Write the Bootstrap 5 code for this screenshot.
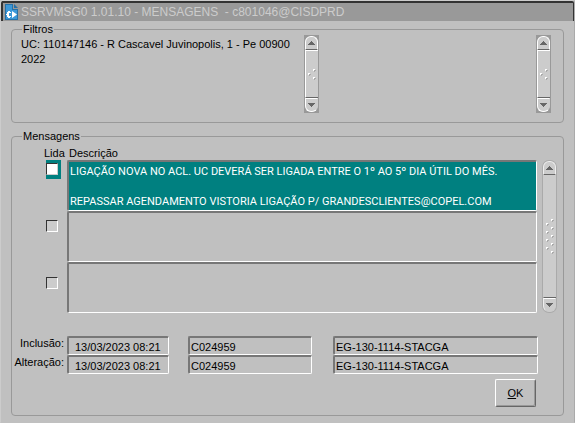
<!DOCTYPE html>
<html lang="pt-BR">
<head>
<meta charset="utf-8">
<meta name="viewport" content="width=device-width, initial-scale=1">
<title>SSRVMSG0 - Mensagens</title>
<link href="https://cdn.jsdelivr.net/npm/bootstrap@5.3.0/dist/css/bootstrap.min.css" rel="stylesheet">
<style>
body { background: #c0c0c0; color: #000; font: 11px/15px "Liberation Sans", Arial, sans-serif; }
.app-window { min-height: 100vh; border: 1px solid #ccc; border-right-color: #aaa; border-bottom-color: #c0c0c0; border-radius: 3px 3px 0 0; }
.title-strip { height: 20px; background: #999; border: solid #333; border-width: 2px 1px 0 2px; border-radius: 2px 2px 0 0; color: #ccc; font-size: 12px; line-height: 18px; padding-left: 2px; }
.title-strip span { margin-left: 3px; }
.group-box { border: 1px solid #999; border-radius: 4px; margin: 0 10px; }
.group-box > legend { float: none; width: auto; margin: 0 0 0 1px; font-size: 11px; line-height: 12px; padding: 0 1px; }
.box-filters { padding: 0 12px 9px 9px; margin-top: 2px; }
.box-messages { padding: 0 25px 8px 9px; margin-top: 7px; }
.filter-text { height: 78px; border: 0; padding: 2px 0; background: transparent; resize: none; overflow: hidden; outline: 0; color: #000; width: 100%; min-width: 0; display: block; }
.filter-main { flex: 298; }
.filter-extra { flex: 232; }
.field { background: #c0c0c0; color: #000; border: 2px solid; border-color: #777 #fff #fff #777; border-radius: 2px; width: 100%; min-width: 0; outline: 0; padding: 2px 1px 0; display: block; }
textarea.field { height: 51px; resize: none; overflow: hidden; border-width: 2px 1px 1px 2px; font-family: Roboto, "Liberation Sans", sans-serif; }
.field.is-current { background: #008080; color: #fff; }
input.field { height: 19px; padding: 2px 1px 0; line-height: 13px; border-width: 2px 1px 1px 2px; }
input.field.stamp { padding-left: 6px; width: 102px; }
input.field.user { width: 124px; }
.read-col { width: 46px; padding-left: 25px; }
.read-cell { height: 19px; width: 15px; margin-bottom: 38px; padding-top: 3px; }
.read-cell.is-current { background: #008080; }
.read-cell input { appearance: none; display: block; width: 12px; height: 12px; margin: 0; background: #ccc; border: 1px solid; border-color: #333 #fff #fff #333; border-radius: 0; }
.read-cell.is-current input { background: #fff; border-color: #333 #ccc #ccc #333; }
.scroller { width: 15px; flex: none; background: #999; padding: 1px; }
.scroller button { height: 14px; padding: 0; background: #ccc; border: 1px solid #fff; border-bottom-color: #666; border-radius: 6px 6px 0 0; }
.scroller button:last-child { border-color: #fff #ccc #fff #fff; border-radius: 0 0 6px 6px; }
.scroller .thumb { background: #ccc; border-left: 1px solid #fff; border-top: 1px solid #fff; border-bottom: 1px solid #666; }
.scroller svg { display: block; }
.scroller-long { margin: 0 -19px 0 5px; background: #aaa; border-radius: 7px; }
.scroller-long button { border-color: #eee #eee #666; }
.scroller-long button:last-child { border-color: #fff #ccc #ccc #eee; }
.scroller-long .thumb { border-left-color: #ccc; border-top-color: #ccc; }
.heading-row { line-height: 15px; padding-top: 4px; height: 18px; }
.heading-row .lida { width: 48px; padding-left: 23px; }
.audit-grid { display: grid; grid-template-columns: 55px 121px 145px 1fr; margin: 23px 0 0 -9px; }
.audit-grid label { text-align: right; padding-right: 3px; }
.ok-btn { width: 41px; height: 28px; padding: 0; margin: 5px 2px 0 0; color: #000; background: #c0c0c0; border: 1px solid; border-color: #fff #666 #666 #fff; border-radius: 2px; font-size: 11px; line-height: 15px; box-shadow: inset -1px -1px #999; }
</style>
<script src="https://cdn.jsdelivr.net/npm/bootstrap@5.3.0/dist/js/bootstrap.bundle.min.js"></script>
</head>
<body>
<svg class="d-none" aria-hidden="true">
  <symbol id="up" viewBox="0 0 7 4"><path fill="#666" d="M3 0h1v1h1v1h1v1h1v1H0V3h1V2h1V1h1z"/></symbol>
  <symbol id="down" viewBox="0 0 7 4"><path fill="#666" d="M0 0h7v1H6v1H5v1H4v1H3V3H2V2H1V1H0z"/></symbol>
  <symbol id="dot" viewBox="0 0 3 3"><path fill="#aaa" d="M1 1h2v1H2v1H1z"/><path fill="#fff" d="M0 0h2v1H1v1H0z"/></symbol>
</svg>
<main class="app-window">
  <header class="title-strip d-flex align-items-center">
    <svg class="flex-shrink-0" width="13" height="16" viewBox="0 0 13 16" aria-hidden="true"><path fill="#2571a8" d="M0 0h8v5h5v11H0z"/><path fill="#3c98d8" d="M1 1h6v5h5v9H1z"/><path fill="#2571a8" d="M9 0l4 4H9z"/><path fill="#fff" d="M7 7l5 3.500-5 3.500zM3 7h2v1h1v1H4v3h2v1H5v1H3v-1H2v-2H1v-1h1V8h1z"/></svg>
    <span class="text-nowrap">SSRVMSG0 1.01.10 - MENSAGENS&nbsp; - c801046@CISDPRD</span>
  </header>

  <fieldset class="group-box box-filters">
    <legend>Filtros</legend>
    <div class="d-flex">
      <div class="filter-main d-flex">
        <textarea class="filter-text" readonly aria-label="Filtro principal">UC: 110147146 - R Cascavel Juvinopolis, 1 - Pe 00900
2022</textarea>
        <div class="scroller d-flex flex-column">
          <button type="button" class="d-flex align-items-center justify-content-center" aria-label="Subir"><svg width="7" height="4"><use href="#up"/></svg></button>
          <div class="thumb flex-grow-1 d-flex align-items-center justify-content-center"><svg width="8" height="11"><use href="#dot" x="5" y="0" width="3" height="3"/><use href="#dot" x="0" y="4" width="3" height="3"/><use href="#dot" x="5" y="8" width="3" height="3"/></svg></div>
          <button type="button" class="d-flex align-items-center justify-content-center" aria-label="Descer"><svg width="7" height="4"><use href="#down"/></svg></button>
        </div>
      </div>
      <div class="filter-extra d-flex">
        <textarea class="filter-text" readonly aria-label="Filtro adicional"></textarea>
        <div class="scroller d-flex flex-column">
          <button type="button" class="d-flex align-items-center justify-content-center" aria-label="Subir"><svg width="7" height="4"><use href="#up"/></svg></button>
          <div class="thumb flex-grow-1 d-flex align-items-center justify-content-center"><svg width="8" height="11"><use href="#dot" x="5" y="0" width="3" height="3"/><use href="#dot" x="0" y="4" width="3" height="3"/><use href="#dot" x="5" y="8" width="3" height="3"/></svg></div>
          <button type="button" class="d-flex align-items-center justify-content-center" aria-label="Descer"><svg width="7" height="4"><use href="#down"/></svg></button>
        </div>
      </div>
    </div>
  </fieldset>

  <fieldset class="group-box box-messages">
    <legend>Mensagens</legend>
    <div class="heading-row d-flex"><span class="lida" id="h-lida">Lida</span><span id="h-desc">Descrição</span></div>
    <div class="d-flex">
      <div class="read-col flex-shrink-0">
        <div class="read-cell is-current"><input type="checkbox" aria-labelledby="h-lida"></div>
        <div class="read-cell"><input type="checkbox" aria-labelledby="h-lida"></div>
        <div class="read-cell mb-0"><input type="checkbox" aria-labelledby="h-lida"></div>
      </div>
      <div class="flex-grow-1">
        <textarea class="field is-current" readonly aria-labelledby="h-desc">LIGAÇÃO NOVA NO ACL. UC DEVERÁ SER LIGADA ENTRE O 1º AO 5º DIA ÚTIL DO MÊS.

REPASSAR AGENDAMENTO VISTORIA LIGAÇÃO P/ GRANDESCLIENTES@COPEL.COM</textarea>
        <textarea class="field" readonly aria-labelledby="h-desc"></textarea>
        <textarea class="field" readonly aria-labelledby="h-desc"></textarea>
      </div>
      <div class="scroller scroller-long d-flex flex-column">
        <button type="button" class="d-flex align-items-center justify-content-center" aria-label="Subir"><svg width="7" height="4"><use href="#up"/></svg></button>
        <div class="thumb flex-grow-1 d-flex align-items-center justify-content-center"><svg width="8" height="35"><use href="#dot" x="5" y="0" width="3" height="3"/><use href="#dot" x="0" y="4" width="3" height="3"/><use href="#dot" x="5" y="8" width="3" height="3"/><use href="#dot" x="0" y="12" width="3" height="3"/><use href="#dot" x="5" y="16" width="3" height="3"/><use href="#dot" x="0" y="20" width="3" height="3"/><use href="#dot" x="5" y="24" width="3" height="3"/><use href="#dot" x="0" y="28" width="3" height="3"/><use href="#dot" x="5" y="32" width="3" height="3"/></svg></div>
        <button type="button" class="d-flex align-items-center justify-content-center" aria-label="Descer"><svg width="7" height="4"><use href="#down"/></svg></button>
      </div>
    </div>
    <div class="audit-grid">
      <label for="inc">Inclusão:</label><input id="inc" class="field stamp" readonly value="13/03/2023 08:21">
      <input class="field user" readonly aria-label="Usuário da inclusão" value="C024959">
      <input class="field" readonly aria-label="Local da inclusão" value="EG-130-1114-STACGA">
      <label for="alt">Alteração:</label><input id="alt" class="field stamp" readonly value="13/03/2023 08:21">
      <input class="field user" readonly aria-label="Usuário da alteração" value="C024959">
      <input class="field" readonly aria-label="Local da alteração" value="EG-130-1114-STACGA">
    </div>
    <div class="d-flex justify-content-end"><button type="button" class="ok-btn"><u>O</u>K</button></div>
  </fieldset>
</main>
</body>
</html>
